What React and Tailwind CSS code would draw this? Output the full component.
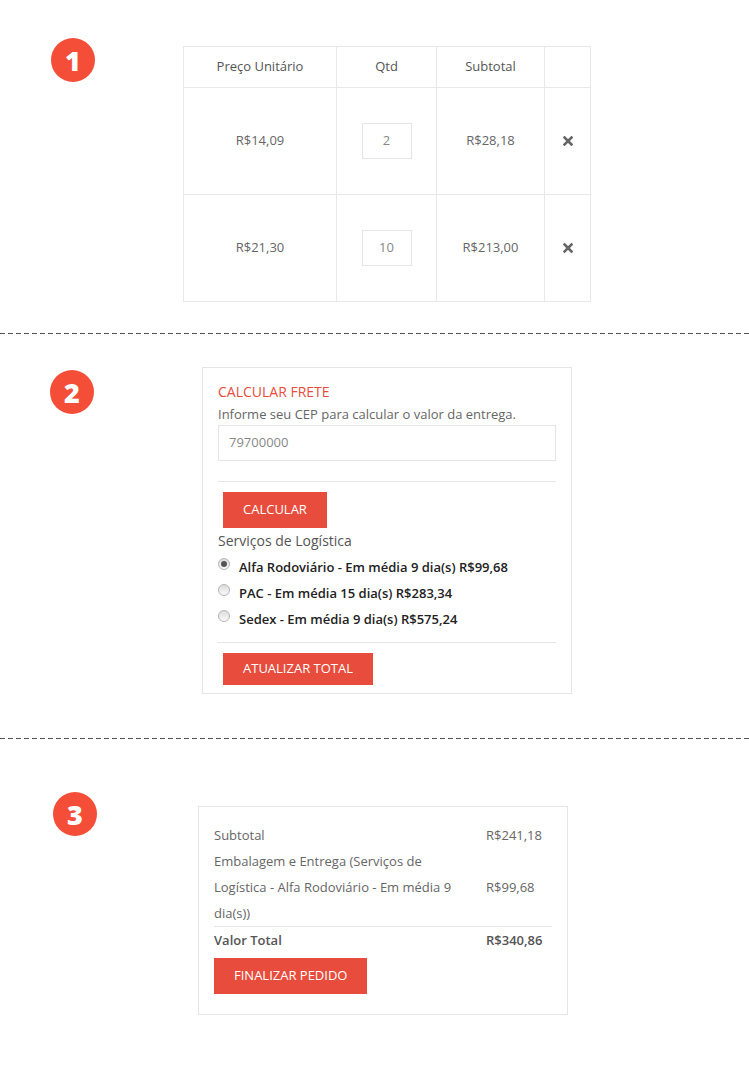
const FONT = { fontFamily: '"Open Sans", "Noto Sans", "Liberation Sans", sans-serif' };

const ITEMS = [
  { price: 'R$14,09', qty: 2, subtotal: 'R$28,18' },
  { price: 'R$21,30', qty: 10, subtotal: 'R$213,00' },
];

const SHIPPING = [
  { label: 'Alfa Rodoviário - Em média 9 dia(s) R$99,68', checked: true },
  { label: 'PAC - Em média 15 dia(s) R$283,34' },
  { label: 'Sedex - Em média 9 dia(s) R$575,24' },
];

function Step({ n }) {
  return (
    <div className="w-11 h-11 shrink-0 rounded-full bg-[#f44d38] text-white grid place-items-center text-[27px] font-extrabold leading-none">
      {n}
    </div>
  );
}

function Dashed() {
  return <div className="h-px bg-[repeating-linear-gradient(to_right,#555_0_5px,transparent_5px_8px)]" />;
}

function Radio({ checked }) {
  return (
    <span className="w-[12px] h-[12px] shrink-0 rounded-full border border-[#b5b5b5] bg-gradient-to-b from-[#dcdcdc] to-[#fafafa] grid place-items-center">
      {checked && <span className="w-[6px] h-[6px] rounded-full bg-[#555]" />}
    </span>
  );
}

function RedButton({ children, className = '' }) {
  return (
    <button className={`bg-[#e74c3c] text-white text-[13px] uppercase px-5 ${className}`}>{children}</button>
  );
}

export default function App() {
  return (
    <div className="min-h-[1082px] bg-white text-[#666]" style={FONT}>
      {/* 1 - Carrinho */}
      <section className="h-[333px] flex pl-[51px] pt-[38px]">
        <Step n="1" />
        <table className="ml-[88px] mt-[8px] h-fit border-collapse text-[13px] text-center">
          <thead>
            <tr className="h-[41px] text-[#555]">
              <th className="w-[153px] border border-[#e8e8e8] font-normal">Preço Unitário</th>
              <th className="w-[100px] border border-[#e8e8e8] font-normal">Qtd</th>
              <th className="w-[108px] border border-[#e8e8e8] font-normal">Subtotal</th>
              <th className="w-[46px] border border-[#e8e8e8]"></th>
            </tr>
          </thead>
          <tbody>
            {ITEMS.map((it) => (
              <tr key={it.price} className="h-[107px]">
                <td className="border border-[#e8e8e8]">{it.price}</td>
                <td className="border border-[#e8e8e8]">
                  <div className="mx-auto w-[50px] h-[36px] border border-[#e5e5e5] grid place-items-center text-[#888]">
                    {it.qty}
                  </div>
                </td>
                <td className="border border-[#e8e8e8]">{it.subtotal}</td>
                <td className="border border-[#e8e8e8]">
                  <svg width="10" height="10" viewBox="0 0 10 10" className="mx-auto">
                    <path d="M1.5 1.5L8.5 8.5M8.5 1.5L1.5 8.5" stroke="#666" strokeWidth="2.6" strokeLinecap="square" />
                  </svg>
                </td>
              </tr>
            ))}
          </tbody>
        </table>
      </section>
      <Dashed />

      {/* 2 - Frete */}
      <section className="h-[404px] flex pl-[50px] pt-[33px]">
        <div className="pt-[3px]">
          <Step n="2" />
        </div>
        <div className="ml-[108px] w-[370px] h-fit border border-[#e5e5e5] px-[15px] pt-[14px] pb-[8px]">
          <h3 className="text-[14px] text-[#e74c3c] uppercase leading-5">Calcular Frete</h3>
          <p className="text-[13px] mt-[2px] leading-5">Informe seu CEP para calcular o valor da entrega.</p>
          <div className="mt-[1px] h-[36px] border border-[#e5e5e5] flex items-center px-[10px] text-[13px] text-[#888]">
            79700000
          </div>
          <hr className="mt-[20px] border-[#e5e5e5]" />
          <RedButton className="ml-[5px] mt-[10px] h-[36px]">Calcular</RedButton>
          <p className="text-[14px] text-[#555] mt-[3px] leading-5">Serviços de Logística</p>
          <div className="mt-[6px] space-y-[6px]">
            {SHIPPING.map((s) => (
              <label key={s.label} className="flex items-start gap-[9px] text-[13px] text-[#222] font-semibold leading-5">
                <span className="mt-[1px]">
                  <Radio checked={s.checked} />
                </span>
                {s.label}
              </label>
            ))}
          </div>
          <hr className="mt-[13px] border-[#e5e5e5]" />
          <RedButton className="ml-[5px] mt-[10px] h-[32px]">Atualizar Total</RedButton>
        </div>
      </section>
      <Dashed />

      {/* 3 - Totais */}
      <section className="flex pl-[53px] pt-[53px] pb-[60px]">
        <Step n="3" />
        <div className="ml-[101px] mt-[14px] w-[370px] border border-[#e5e5e5] px-[15px] pt-[15px] pb-[20px] text-[13px]">
          <div className="leading-[26px]">
            <div className="flex">
              <span className="w-[272px]">Subtotal</span>
              <span>R$241,18</span>
            </div>
            <div className="flex items-center">
              <span className="w-[272px] pr-[10px]">
                Embalagem e Entrega (Serviços de Logística - Alfa Rodoviário - Em média 9 dia(s))
              </span>
              <span>R$99,68</span>
            </div>
          </div>
          <div className="border-t border-[#e5e5e5] flex font-semibold text-[#555] leading-[26px]">
            <span className="w-[272px]">Valor Total</span>
            <span>R$340,86</span>
          </div>
          <RedButton className="mt-[5px] h-[36px]">Finalizar Pedido</RedButton>
        </div>
      </section>
    </div>
  );
}
